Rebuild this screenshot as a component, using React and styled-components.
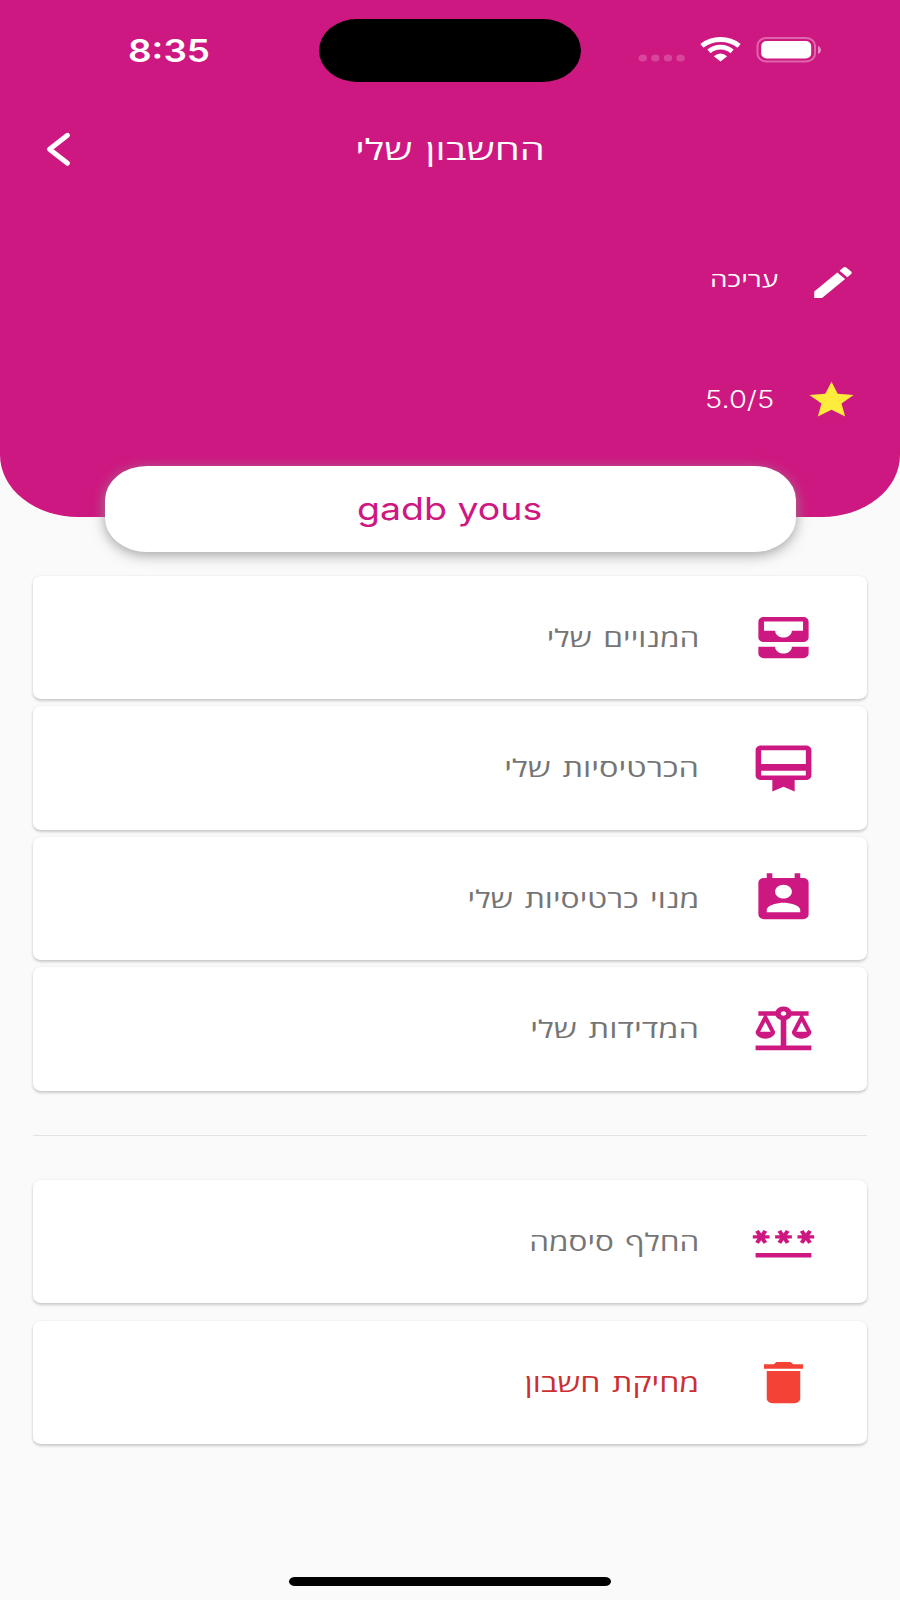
import React from "react";
import styled, { createGlobalStyle } from "styled-components";
import {
  MdAllInbox,
  MdBalance,
  MdCardMembership,
  MdDelete,
  MdEdit,
  MdPassword,
  MdPermContactCalendar,
  MdStar,
} from "react-icons/md";

const PINK = "#ce1881";

const GlobalStyle = createGlobalStyle`
  * { box-sizing: border-box; }
  body { margin: 0; background: #fafafa; }
`;

const Screen = styled.div`
  width: 900px;
  height: 1600px;
  overflow: hidden;
  display: flex;
  flex-direction: column;
  background: #fafafa;
  font-family: "Open Sans", "Liberation Sans", sans-serif;
`;

const Header = styled.header`
  height: 517px;
  flex: none;
  background: ${PINK};
  border-radius: 0 0 78px 78px / 0 0 62px 62px;
  color: #fff;
`;

const StatusBar = styled.div`
  height: 100px;
  display: grid;
  grid-template-columns: 319px 262px 319px;
`;

const Wide = styled.span`
  display: inline-block;
  white-space: nowrap;
  line-height: 1;
  font-size: ${(p) => p.$size}px;
  font-weight: ${(p) => p.$weight || 400};
  color: ${(p) => p.$color || "inherit"};
  margin-bottom: ${(p) => p.$raise || 0}px;
  word-spacing: ${(p) => p.$words || 0}px;
  transform: scaleX(${(p) => p.$stretch || 1.2});
  transform-origin: ${(p) => p.$origin || "center"};
  font-family: ${(p) => (p.$latin ? 'Inter, "Liberation Sans", sans-serif' : "inherit")};
`;

const Clock = styled.div`
  padding: 35px 0 0 128px;
`;

const Island = styled.div`
  margin-top: 19px;
  height: 63px;
  background: #000;
  border-radius: 38px / 31.5px;
`;

const Indicators = styled.div`
  display: flex;
  padding: 37px 0 0 57px;
`;

const TitleBar = styled.div`
  height: 98px;
  display: grid;
  grid-template-columns: 100px 1fr 100px;
  align-items: center;
  text-align: center;
`;

const BackButton = styled.button`
  border: 0;
  padding: 0 0 0 45px;
  background: none;
  display: flex;
`;

const InfoRow = styled.div`
  direction: rtl;
  display: flex;
  align-items: center;
  height: ${(p) => p.$height}px;
  margin-top: ${(p) => p.$top}px;
  padding-right: ${(p) => p.$right}px;
  gap: ${(p) => p.$gap}px;

  svg { flex: none; }
`;

const NameChip = styled.div`
  width: 691px;
  height: 86px;
  flex: none;
  margin: -51px auto 0;
  background: #fff;
  border-radius: 42px / 34px;
  box-shadow: 0 3px 13px rgba(145, 145, 145, 0.85);
  display: flex;
  align-items: center;
  justify-content: center;
`;

const Menu = styled.nav`
  direction: rtl;
  display: flex;
  flex-direction: column;
  gap: ${(p) => p.$gap}px;
  margin: ${(p) => p.$top}px 33px 0;
`;

const Card = styled.div`
  height: 123.6px;
  display: flex;
  align-items: center;
  padding-right: 50px;
  gap: 51px;
  background: #fff;
  border-radius: 8.4px / 6.9px;
  box-shadow: 0 2px 3px rgba(0, 0, 0, 0.18), 0 0 3px rgba(0, 0, 0, 0.07);

  svg { flex: none; }
`;

const Divider = styled.hr`
  width: 834px;
  height: 1px;
  flex: none;
  border: 0;
  margin: 44px auto 0;
  background: #e3e3e3;
`;

const HomeBar = styled.div`
  width: 322px;
  height: 9px;
  margin: auto auto 13.7px;
  border-radius: 6px / 4.5px;
  background: #000;
`;

function Icon({ as: Glyph, color, width = 67, height = 55 }) {
  return <Glyph color={color} style={{ width, height }} preserveAspectRatio="none" />;
}

const StatusIcons = () => (
  <svg width="190" height="26" viewBox="0 0 190 26" fill="none">
    <g fill="#fff" fillOpacity=".2">
      {[4.7, 17.3, 30, 42.6].map((x) => (
        <ellipse key={x} cx={x} cy="21" rx="4.2" ry="3.6" />
      ))}
    </g>
    <g transform="translate(62 0)">
      <path d="M1.9 8.9C12.500 .4 28.500 .4 39.100 8.900" stroke="#fff" strokeWidth="4.900" />
      <path d="M8.900 14.300C15.500 8.700 25.500 8.700 32.100 14.300" stroke="#fff" strokeWidth="4.900" />
      <path d="M13.800 19.200Q20.500 13.800 27.200 19.200L20.500 24.600Z" fill="#fff" />
    </g>
    <rect x="119.500" y="1" width="57.500" height="23.500" rx="9" ry="7.500" stroke="#fff" strokeOpacity=".34" strokeWidth="2" />
    <rect x="123.200" y="4" width="50" height="17.500" rx="5.500" ry="5" fill="#fff" />
    <path d="M180 9c4 1.500 4 6.500 0 8z" fill="#fff" fillOpacity=".5" />
  </svg>
);

const mainItems = [
  { icon: MdAllInbox, label: "המנויים שלי", stretch: 1.29 },
  { icon: MdCardMembership, label: "הכרטיסיות שלי", stretch: 1.325 },
  { icon: MdPermContactCalendar, label: "מנוי כרטיסיות שלי", stretch: 1.3 },
  { icon: MdBalance, label: "המדידות שלי", stretch: 1.33 },
];

const accountItems = [
  { icon: MdPassword, label: "החלף סיסמה", stretch: 1.285 },
  { icon: MdDelete, label: "מחיקת חשבון", stretch: 1.31, iconColor: "#f44336", color: "#cd2f30" },
];

function MenuCard({ icon, label, iconColor = PINK, color = "#757575", stretch }) {
  return (
    <Card>
      <Icon as={icon} color={iconColor} />
      <Wide $size={24.5} $words={2.5} $raise={-1} $stretch={stretch} $color={color} $origin="right center">
        {label}
      </Wide>
    </Card>
  );
}

export default function App() {
  return (
    <Screen>
      <GlobalStyle />
      <Header>
        <StatusBar>
          <Clock>
            <Wide $latin $size={31} $weight={600} $stretch={1.19} $origin="left center">8:35</Wide>
          </Clock>
          <Island />
          <Indicators>
            <StatusIcons />
          </Indicators>
        </StatusBar>
        <TitleBar>
          <BackButton aria-label="חזרה">
            <svg width="28" height="36" viewBox="0 0 28 36" fill="none">
              <path d="M22.500 4.300L4.500 18.300L22.500 32.300" stroke="#fff" strokeWidth="4.900" strokeLinecap="round" strokeLinejoin="round" />
            </svg>
          </BackButton>
          <Wide $size={28.5} $words={2} $stretch={1.4}>החשבון שלי</Wide>
          <span />
        </TitleBar>
        <InfoRow $top={62} $height={45} $right={42} $gap={30}>
          <Icon as={MdEdit} color="#fff" width={50} height={41} />
          <Wide $size={21} $raise={6} $stretch={1.33} $origin="right center">עריכה</Wide>
        </InfoRow>
        <InfoRow $top={73} $height={44} $right={42.5} $gap={30}>
          <Icon as={MdStar} color="#ffeb3b" width={53} height={44} />
          <Wide $latin $size={24} $weight={340} $stretch={1.21} $origin="right center">5.0/5</Wide>
        </InfoRow>
      </Header>
      <NameChip>
        <Wide $latin $size={31} $weight={370} $stretch={1.21} $raise={1} $color={PINK}>gadb yous</Wide>
      </NameChip>
      <Menu $top={23.700} $gap={6.950}>
        {mainItems.map((item) => (
          <MenuCard key={item.label} {...item} />
        ))}
      </Menu>
      <Divider />
      <Menu $top={44} $gap={17.200}>
        {accountItems.map((item) => (
          <MenuCard key={item.label} {...item} />
        ))}
      </Menu>
      <HomeBar />
    </Screen>
  );
}
